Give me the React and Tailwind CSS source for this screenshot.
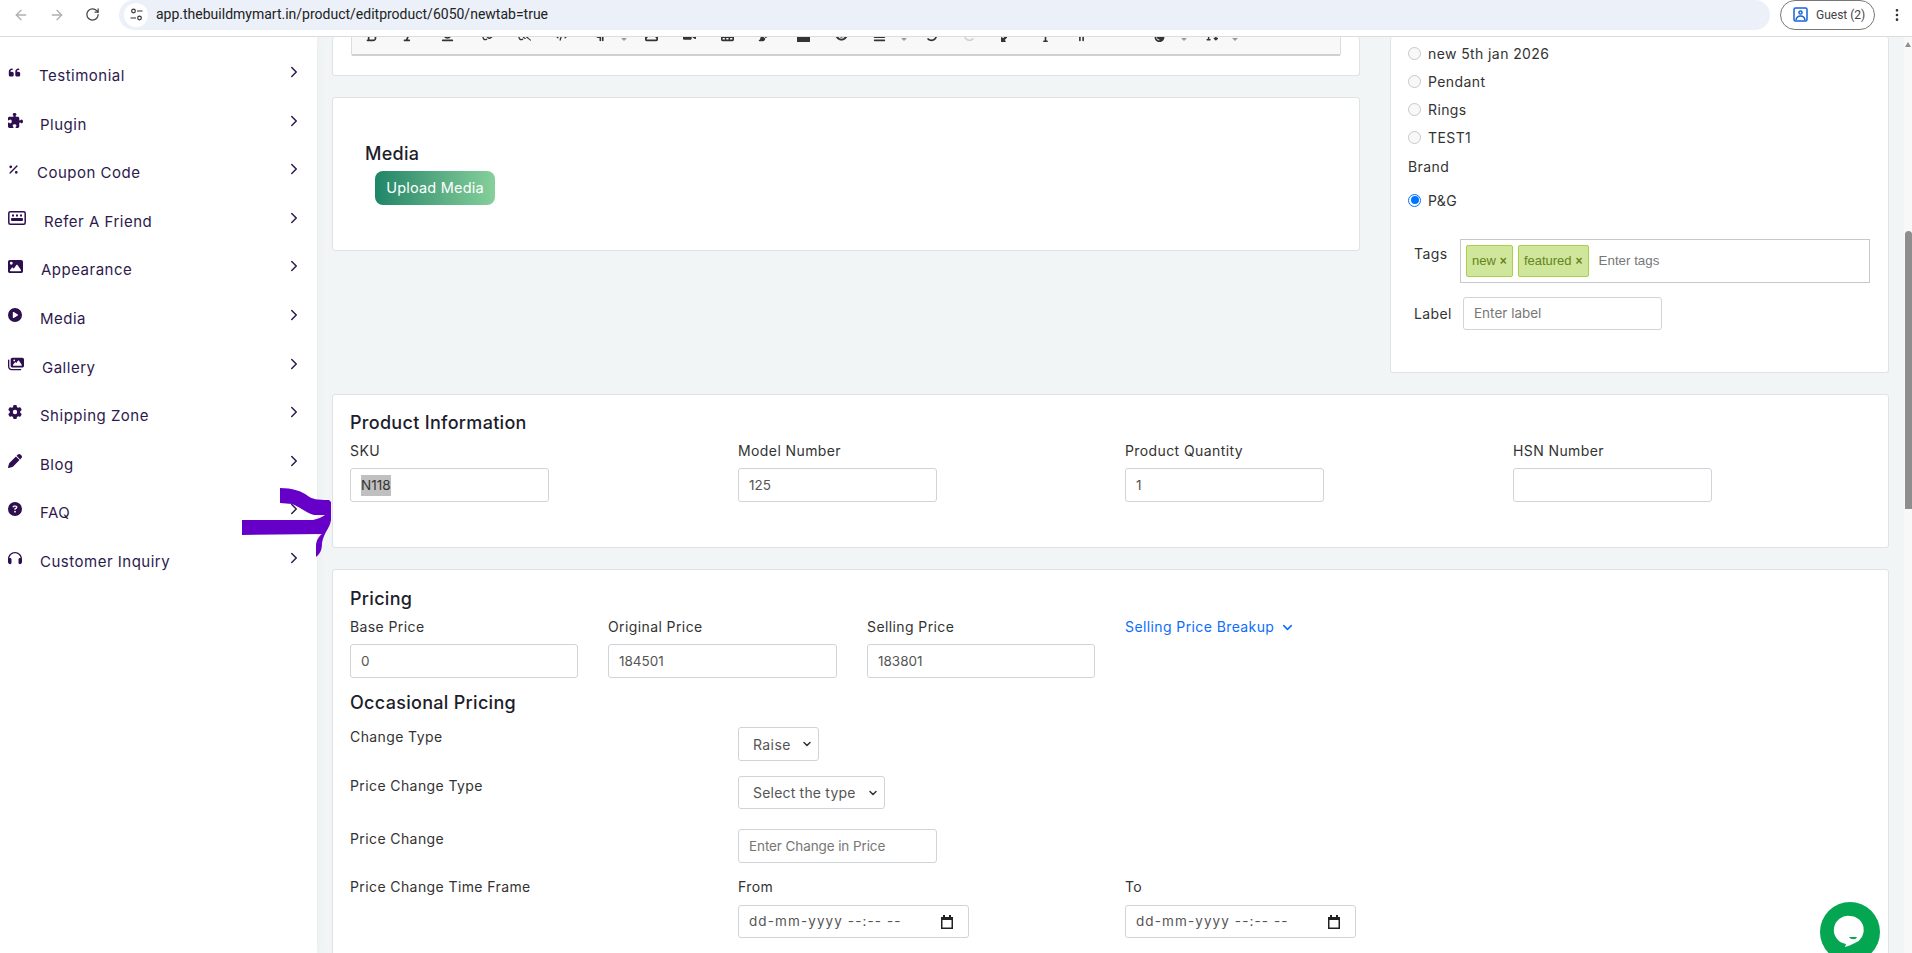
import React from "react";
import { ArrowLeft, ArrowRight, RotateCw, ChevronRight, ChevronDown, EllipsisVertical } from "lucide-react";
import { FaQuoteLeft, FaPuzzlePiece, FaPercent, FaImage, FaCirclePlay, FaImages, FaGear, FaPen, FaCircleQuestion, FaHeadphones, FaBold, FaItalic, FaUnderline, FaLink, FaLinkSlash, FaCode, FaParagraph, FaVideo, FaTableCells, FaPaintbrush, FaSquareFull, FaEye, FaAlignJustify, FaRotateLeft, FaRotateRight, FaUpRightAndDownLeftFromCenter, FaInfo, FaGripLinesVertical, FaDroplet, FaTextHeight } from "react-icons/fa6";

const font = "font-['Inter','Open_Sans',sans-serif]";
const body = "text-[14px] tracking-[0.4px] ";
const heading = "text-[18px] tracking-[0.3px] h-[24px] leading-[26px] text-[#1d1d2b] font-medium";

function ReferIcon({ size, color }) {
  return (
    <svg width={size} height={14} viewBox="0 0 18 14" fill="none">
      <rect x="0.8" y="0.8" width="16.4" height="12.4" rx="1.5" stroke={color} strokeWidth="1.5" />
      <g fill={color}>
        <rect x="4" y="3.5" width="2" height="2" /><rect x="8" y="3.5" width="2" height="2" /><rect x="12" y="3.5" width="2" height="2" />
        <rect x="3" y="7" width="12" height="3" rx="1" />
      </g>
    </svg>
  );
}

const menu = [
  [FaQuoteLeft, "Testimonial", 39, 13],
  [FaPuzzlePiece, "Plugin", 40, 15],
  [FaPercent, "Coupon Code", 37, 11],
  [ReferIcon, "Refer A Friend", 44, 18],
  [FaImage, "Appearance", 41, 15],
  [FaCirclePlay, "Media", 40, 14],
  [FaImages, "Gallery", 42, 16],
  [FaGear, "Shipping Zone", 40, 14],
  [FaPen, "Blog", 40, 14],
  [FaCircleQuestion, "FAQ", 40, 14],
  [FaHeadphones, "Customer Inquiry", 40, 14],
];

const tools = [
  [370, FaBold], [407, FaItalic], [446, FaUnderline], [487, FaLink], [523, FaLinkSlash], [560, FaCode],
  [598, FaParagraph], [622, "caret"], [650, FaImage], [688, FaVideo], [726, FaTableCells], [763, FaPaintbrush],
  [802, FaSquareFull], [840, FaEye], [878, FaAlignJustify], [902, "caret"], [930, FaRotateLeft], [968, FaRotateRight, "#d0d0d0"],
  [1006, FaUpRightAndDownLeftFromCenter], [1044, FaInfo], [1080, FaGripLinesVertical], [1158, FaDroplet], [1182, "caret"],
  [1210, FaTextHeight], [1233, "caret"],
];

function Card({ className = "", children }) {
  return <div className={"bg-white border border-[#dfe3e6] rounded-[3px] " + className}>{children}</div>;
}

function Field({ label, value, w, mr, selected }) {
  return (
    <div className={mr}>
      <div className={body + "leading-[20px] text-[#333] pt-[1px]"}>{label}</div>
      <div className={"mt-[7px] h-[34px] border border-[#cfd4da] rounded-[3px] flex items-center px-[10px] text-[13.5px] text-[#555] " + w}>
        {selected ? <span className="bg-[#c0c0c0] text-[#333] leading-[21px]">{value}</span> : value}
      </div>
    </div>
  );
}

function DateBox() {
  return (
    <div className="mt-[8px] h-[33px] w-[231px] border border-[#cfd4da] rounded-[3px] flex items-center justify-between pl-[10px] pr-[7px] text-[13.5px] tracking-[1.1px] text-[#555]">
      <span>dd-mm-yyyy --:-- --</span>
      <svg width="14" height="14" viewBox="0 0 14 14" className="mr-[7px]"><path d="M3 0h2v2h4V0h2v2h2v12H1V2h2z" fill="#222" /><rect x="2.5" y="5" width="9" height="7.5" fill="#fff" /></svg>
    </div>
  );
}

function Radio({ label, checked }) {
  return (
    <div className={body + "flex items-center h-[28px] text-[#333]"}>
      {checked ? (
        <span className="w-[13px] h-[13px] rounded-full border-[1.5px] border-[#0075ff] flex items-center justify-center mr-[7px]"><span className="w-[8px] h-[8px] rounded-full bg-[#0075ff]" /></span>
      ) : (
        <span className="w-[13px] h-[13px] rounded-full border border-[#c8c8c8] bg-[#f8f8f8] mr-[7px]" />
      )}
      <span>{label}</span>
    </div>
  );
}

function Tag({ children }) {
  return (
    <span className="h-[32px] px-[5px] bg-[#d0e69b] border border-[#a5d24a] rounded-[2px] text-[#638421] text-[13px] flex items-center font-['Liberation_Sans',sans-serif]">
      {children}<span className="ml-[4px] font-bold text-[12px]">×</span>
    </span>
  );
}

export default function App() {
  return (
    <div className={"w-[1912px] h-[953px] overflow-hidden relative bg-[#f2f5f6] flex flex-col " + font}>
      <header className="h-[37px] shrink-0 bg-white border-b border-[#dcdcdc] flex items-center relative z-20">
        <ArrowLeft size={16} className="ml-[13px] -mt-[7px] text-[#b0b0b0]" />
        <ArrowRight size={16} className="ml-[20px] -mt-[7px] text-[#b0b0b0]" />
        <RotateCw size={15} className="ml-[20px] -mt-[7px] text-[#444]" />
        <div className="ml-[19px] w-[1651px] h-[30px] -mt-[7px] rounded-[15px] bg-[#ebf0f9] flex items-center">
          <span className="ml-[5px] w-[24px] h-[24px] rounded-full bg-white flex items-center justify-center">
            <svg width="13" height="13" viewBox="0 0 13 13" fill="none" stroke="#333" strokeWidth="1.2"><circle cx="3.5" cy="3" r="1.8" /><path d="M7 3h5.5M.5 10H6" /><circle cx="9.5" cy="10" r="1.8" /></svg>
          </span>
          <span className="ml-[8px] text-[14px] text-[#222] font-['Roboto',sans-serif]">app.thebuildmymart.in/product/editproduct/6050/newtab=true</span>
        </div>
        <div className="ml-[10px] -mt-[7px] h-[30px] w-[95px] border border-[#777] rounded-[15px] flex items-center text-[12px] text-[#444] font-['Roboto',sans-serif]">
          <svg width="15" height="15" viewBox="0 0 15 15" className="ml-[12px]" fill="none" stroke="#1a62d6" strokeWidth="1.5"><rect x="1" y="1" width="13" height="13" rx="1.5" /><circle cx="7.5" cy="5.5" r="1.6" /><path d="M3 13c.5-3 2-4 4.5-4s4 1 4.5 4" /></svg>
          <span className="ml-[8px]">Guest (2)</span>
        </div>
        <EllipsisVertical size={16} className="ml-[14px] -mt-[7px] text-[#333]" />
      </header>

      <div className="flex flex-1 min-h-0">
        <aside className="w-[317px] shrink-0 bg-white pt-[27px] text-[#2d1a4d] shadow-[2px_0_8px_rgba(0,0,0,0.03)]">
          {menu.map(([Icon, label, tx, isz]) => (
            <div key={label} className="h-[48.6px] flex items-start relative pl-[8px] text-[15px] tracking-[0.5px]">
              <span className="w-[18px] h-[18px] flex items-center mt-[-1px]"><Icon size={isz} color="#2d0f4f" /></span>
              <span className="absolute top-[1px]" style={{ left: tx }}>{label}</span>
              <ChevronRight size={18} strokeWidth={2} className="absolute left-[285px] -top-[1px] text-[#2d1a4d]" />
            </div>
          ))}
        </aside>

        <main className="flex-1 pl-[15px] min-w-0">
          <div className="flex items-start">
            <div className="w-[1028px]">
              <Card className="h-[39px] border-t-0">
                <div className="mx-[18px] h-[19px] bg-[#f8f8f8] border-x border-[#dddddd] border-b-[2px] border-b-[#d0d0d0] relative overflow-hidden rounded-b-[2px]">
                  {tools.map(([x, Icon, c], i) => (
                    Icon === "caret" ? (
                      <span key={i} className="absolute top-[1px] border-x-[3px] border-x-transparent border-t-[3px] border-t-[#999]" style={{ left: x - 353 }} />
                    ) : (
                      <span key={i} className="absolute -top-[8px]" style={{ left: x - 357 }}><Icon size={13} color={c || "#333"} /></span>
                    )
                  ))}
                </div>
              </Card>
              <Card className="mt-[21px] h-[154px] pt-[43px] pl-[32px]">
                <div className={heading}>Media</div>
                <div className="ml-[10px] mt-[6px] w-[120px] h-[34px] rounded-[8px] bg-gradient-to-r from-[#1d8568] to-[#85d09b] text-white text-[14.5px] tracking-[0.2px] flex items-center justify-center">Upload Media</div>
              </Card>
            </div>
            <Card className="ml-[30px] w-[499px] h-[336px] border-t-0 pl-[17px] pt-[2px]">
              <Radio label="new 5th jan 2026" />
              <Radio label="Pendant" />
              <Radio label="Rings" />
              <Radio label="TEST1" />
              <div className={body + "mt-[2px] h-[28px] leading-[28px] text-[#333]"}>Brand</div>
              <div className="mt-[5px]"><Radio label="P&G" checked /></div>
              <div className="mt-[25px] flex items-start ml-[6px]">
                <div className={body + "leading-[20px] text-[#333] w-[46px] pt-[5px]"}>Tags</div>
                <div className="w-[410px] h-[44px] border border-[#c8c8c8] flex items-center pl-[5px] gap-[5px]">
                  <Tag>new</Tag>
                  <Tag>featured</Tag>
                  <span className="ml-[5px] text-[13.33px] text-[#777] font-['Liberation_Sans',sans-serif]">Enter tags</span>
                </div>
              </div>
              <div className="mt-[14px] flex items-center ml-[6px]">
                <div className={body + "text-[#333] w-[49px]"}>Label</div>
                <div className="w-[199px] h-[33px] border border-[#cfd4da] rounded-[3px] flex items-center px-[10px] text-[13.5px] text-[#777]">Enter label</div>
              </div>
            </Card>
          </div>

          <Card className="mt-[21px] w-[1557px] h-[154px] px-[17px] pt-[15px]">
            <div className={heading}>Product Information</div>
            <div className="flex mt-[6px]">
              <Field label="SKU" value="N118" w="w-[199px]" mr="w-[388px]" selected />
              <Field label="Model Number" value="125" w="w-[199px]" mr="w-[387px]" />
              <Field label="Product Quantity" value="1" w="w-[199px]" mr="w-[388px]" />
              <Field label="HSN Number" value="" w="w-[199px]" mr="w-[199px]" />
            </div>
          </Card>

          <Card className="mt-[21px] w-[1557px] h-[400px] px-[17px] pt-[16px]">
            <div className={heading}>Pricing</div>
            <div className="flex mt-[6px]">
              <Field label="Base Price" value="0" w="w-[228px]" mr="w-[258px]" />
              <Field label="Original Price" value="184501" w="w-[229px]" mr="w-[259px]" />
              <Field label="Selling Price" value="183801" w="w-[228px]" mr="w-[258px]" />
              <div className={body + "leading-[20px] text-[#0d6efd] flex items-center h-[21px] pt-[1px]"}>
                Selling Price Breakup<ChevronDown size={15} strokeWidth={2.5} className="ml-[6px]" />
              </div>
            </div>
            <div className={"mt-[12px] " + heading}>Occasional Pricing</div>
            <div className={body + "flex mt-[13px] h-[49px] text-[#333]"}>
              <div className="w-[388px] leading-[20px]">Change Type</div>
              <div className="h-[34px] w-[81px] border border-[#cfd4da] rounded-[3px] flex items-center justify-between pl-[14px] pr-[5px] text-[#555]">Raise<ChevronDown size={12} strokeWidth={3} className="text-[#333]" /></div>
            </div>
            <div className={body + "flex h-[53px] text-[#333]"}>
              <div className="w-[388px] leading-[20px]">Price Change Type</div>
              <div className="h-[33px] w-[147px] border border-[#cfd4da] rounded-[3px] flex items-center justify-between pl-[14px] pr-[5px] tracking-[0.2px] text-[#555]">Select the type<ChevronDown size={12} strokeWidth={3} className="text-[#333]" /></div>
            </div>
            <div className={body + "flex h-[48px] text-[#333]"}>
              <div className="w-[388px] leading-[20px]">Price Change</div>
              <div className="h-[34px] w-[199px] border border-[#cfd4da] rounded-[3px] flex items-center px-[10px] text-[13.5px] tracking-[-0.1px] text-[#777]">Enter Change in Price</div>
            </div>
            <div className={body + "flex text-[#333]"}>
              <div className="w-[388px] leading-[20px]">Price Change Time Frame</div>
              <div className="w-[387px]"><div className="leading-[20px]">From</div><DateBox /></div>
              <div><div className="leading-[20px]">To</div><DateBox /></div>
            </div>
          </Card>
        </main>
        <div className="w-[8px] shrink-0 relative bg-[#f8f8f8]">
          <div className="absolute top-[194px] left-[1px] w-[7px] h-[278px] rounded-t-[4px] bg-[#8e8e8e]" />
          <div className="absolute top-[5px] left-[1px] border-x-[3.5px] border-x-transparent border-b-[5px] border-b-[#8e8e8e]" />
        </div>
      </div>

      <svg className="absolute left-[242px] top-[488px] z-30" width="90" height="70" viewBox="0 0 90 70" fill="#6600c8">
        <path d="M38 0C50 0 60 3 66 8C70 11 75 12 87 12L89 14L89 32C88 40 82 44 80 55C80 62 78 66 74 69L74 58C74 52 78 47 80 46L0 47L0 32L71 32C76 31 80 29 83 27L72 27C64 25 58 19 50 16L38 15Z" />
      </svg>

      <div className="absolute left-[1820px] top-[902px] z-30 w-[60px] h-[60px] rounded-full bg-[#05a651]">
        <svg width="60" height="60" viewBox="0 0 60 60"><path d="M30 14a14 14 0 0 1 5 27c-4 2-7 3-10 4l1-3A14 14 0 0 1 30 14z" fill="#fff" /><path d="M29 35h8c-1 3-6 3-8 0z" fill="#05a651" /></svg>
      </div>
    </div>
  );
}
